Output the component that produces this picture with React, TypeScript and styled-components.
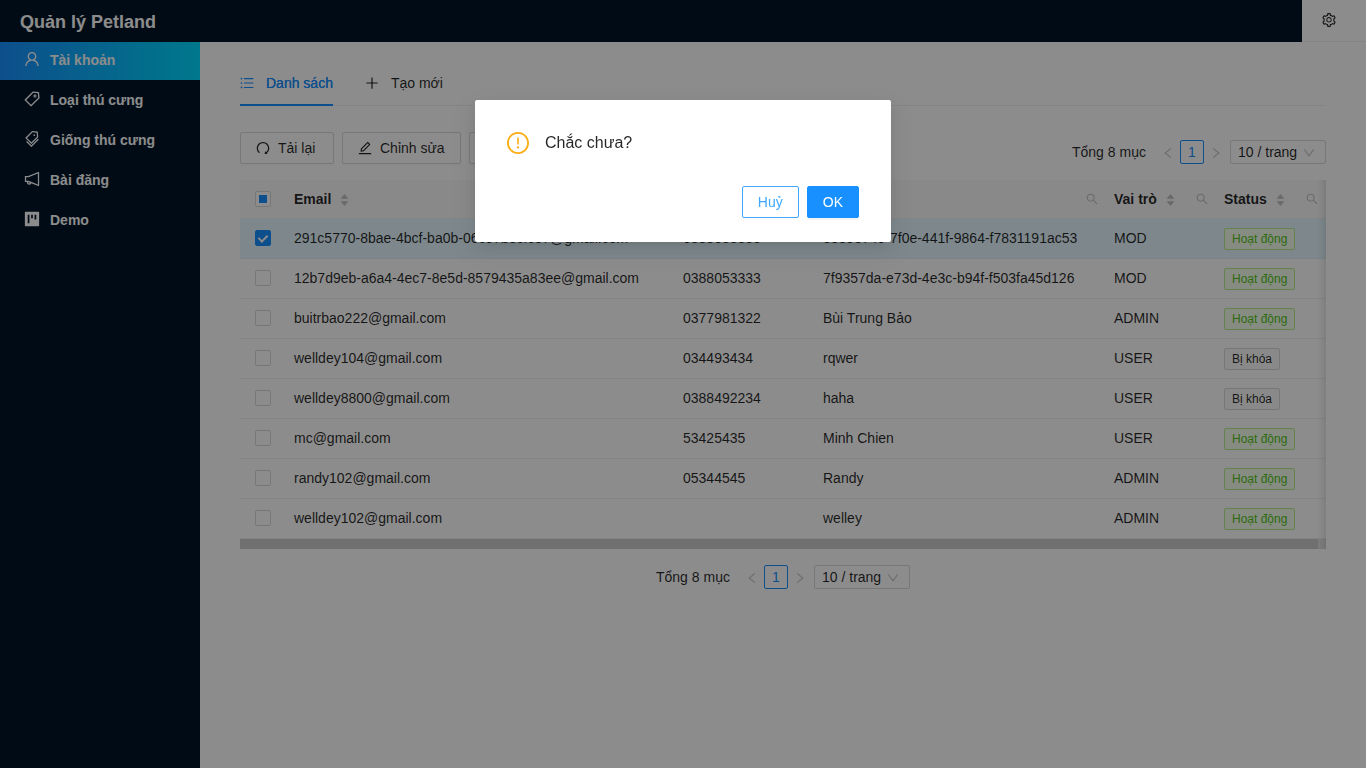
import React from "react";
import styled, { createGlobalStyle, css } from "styled-components";
import type { IconType } from "react-icons";
import {
  AiFillCaretDown,
  AiFillCaretUp,
  AiFillProject,
  AiOutlineDown,
  AiOutlineEdit,
  AiOutlineExclamationCircle,
  AiOutlineDelete,
  AiOutlineLeft,
  AiOutlineNotification,
  AiOutlinePlus,
  AiOutlineRedo,
  AiOutlineRight,
  AiOutlineSearch,
  AiOutlineSetting,
  AiOutlineTag,
  AiOutlineTags,
  AiOutlineUnorderedList,
  AiOutlineUser,
} from "react-icons/ai";

const color = {
  primary: "#1890ff",
  primaryHover: "#40a9ff",
  navy: "#001529",
  text: "rgba(0, 0, 0, 0.85)",
  disabled: "rgba(0, 0, 0, 0.25)",
  border: "#d9d9d9",
  split: "#f0f0f0",
  icon: "#bfbfbf",
};

const GlobalStyle = createGlobalStyle`
  *, *::before, *::after { box-sizing: border-box; }
  body {
    margin: 0;
    background: #fff;
    color: ${color.text};
    font-family: "Liberation Sans", Arial, sans-serif;
    font-size: 14px;
    line-height: 22px;
  }
  button, input, select { font: inherit; color: inherit; margin: 0; }
  svg { display: block; flex: none; }
`;

/* Ant icons carry a 64-unit margin; this draws them edge to edge. */
function Icon({ of: Glyph, size = 14 }: { of: IconType; size?: number }) {
  return <Glyph size={size} viewBox="64 64 896 896" aria-hidden="true" />;
}

/* ---------- Header ---------- */

const Header = styled.header`
  position: fixed;
  inset: 0 0 auto 0;
  z-index: 2;
  display: flex;
  justify-content: space-between;
  height: 42px;
  background: ${color.navy};
`;

const Brand = styled.h1`
  margin: 0;
  padding: 0 20px;
  color: #fff;
  font-size: 18px;
  line-height: 44px;
`;

const SettingsButton = styled.button`
  display: flex;
  align-items: center;
  width: 64px;
  padding: 0 20px 2px;
  border: 0;
  border-bottom: 1px solid ${color.split};
  background: #fff;
`;

/* ---------- Shell ---------- */

const Shell = styled.div`
  display: flex;
  min-height: 100vh;
  padding-top: 40px;
`;

const Sidebar = styled.nav`
  flex: none;
  width: 200px;
  background: ${color.navy};
`;

const MenuLink = styled.a<{ $active?: boolean }>`
  display: flex;
  align-items: center;
  gap: 10px;
  height: 40px;
  padding: 0 24px;
  color: #fff;
  font-weight: 700;
  text-decoration: none;
  ${(p) =>
    p.$active &&
    css`
      background: linear-gradient(to right, #1890ff, #00dbff);
    `}
  svg { margin-bottom: 2px; }
`;

const Main = styled.main`
  flex: 1;
  min-width: 0;
  padding: 20px 40px;
`;

/* ---------- Tabs and toolbar ---------- */

const TabList = styled.div`
  display: flex;
  gap: 32px;
  margin-bottom: 26px;
  box-shadow: inset 0 -1px ${color.split};
`;

const Tab = styled.button<{ $active?: boolean }>`
  display: flex;
  align-items: center;
  gap: 12px;
  height: 46px;
  padding: 2px 0 0;
  border: 0;
  border-bottom: 2px solid ${(p) => (p.$active ? color.primary : "transparent")};
  background: none;
  color: ${(p) => (p.$active ? color.primary : "inherit")};
  text-shadow: ${(p) => (p.$active ? "0 0 currentcolor" : "none")};
`;

const Toolbar = styled.div`
  display: flex;
  justify-content: space-between;
  align-items: flex-end;
  margin-bottom: 16px;
`;

const ButtonGroup = styled.div`
  display: flex;
  gap: 8px;
`;

const Button = styled.button<{ $kind?: "primary" | "outline" }>`
  display: flex;
  align-items: center;
  gap: 8px;
  height: 32px;
  padding: 0 15px;
  border: 1px solid ${color.border};
  border-radius: 2px;
  background: #fff;
  box-shadow: 0 2px 0 rgba(0, 0, 0, 0.016);
  ${ButtonGroup} > & { min-width: 94px; }
  ${(p) =>
    p.$kind === "outline" &&
    css`
      border-color: ${color.primaryHover};
      color: ${color.primaryHover};
    `}
  ${(p) =>
    p.$kind === "primary" &&
    css`
      border-color: ${color.primary};
      background: ${color.primary};
      color: #fff;
      box-shadow: 0 2px 0 rgba(0, 0, 0, 0.045);
    `}
`;

/* ---------- Pagination ---------- */

const Pager = styled.div`
  display: flex;
  align-items: center;
  height: 24px;
`;

const PagerTotal = styled.span`
  min-width: 76px;
  margin-right: 8px;
`;

const PagerButton = styled.button<{ $current?: boolean }>`
  display: flex;
  align-items: center;
  justify-content: center;
  width: 24px;
  height: 24px;
  padding: 0;
  border: 1px solid ${(p) => (p.$current ? color.primary : "transparent")};
  border-radius: 2px;
  background: ${(p) => (p.$current ? "#fff" : "none")};
  color: ${(p) => (p.$current ? color.primary : color.disabled)};
  svg { margin-top: 2px; }
`;

const SizePicker = styled.label`
  position: relative;
  margin-left: 2px;
  svg {
    position: absolute;
    top: 7px;
    right: 11px;
    color: ${color.disabled};
    pointer-events: none;
  }
`;

const SizeSelect = styled.select`
  display: block;
  width: 96px;
  height: 24px;
  padding: 0 7px;
  border: 1px solid ${color.border};
  border-radius: 2px;
  background: #fff;
  appearance: none;
`;

const BottomPager = styled.div`
  display: flex;
  justify-content: center;
  margin-top: 16px;
`;

/* ---------- Table ---------- */

const TableFrame = styled.div`
  position: relative;
  overflow: hidden;
  &::after {
    content: "";
    position: absolute;
    inset: 0 0 0 auto;
    width: 30px;
    box-shadow: inset -10px 0 8px -8px rgba(0, 0, 0, 0.15);
    pointer-events: none;
  }
`;

const Table = styled.table`
  width: 100%;
  min-width: 960px;
  border-collapse: separate;
  border-spacing: 0;
  table-layout: fixed;
`;

const HeadCell = styled.th`
  height: 39px;
  padding: 0 8px;
  border-bottom: 1px solid ${color.split};
  background: #fafafa;
  text-align: left;
`;

const HeadContent = styled.div`
  display: flex;
  align-items: center;
  svg { color: ${color.icon}; }
  > svg { margin-left: auto; }
`;

const Sorter = styled.span`
  display: flex;
  flex-direction: column;
  margin: 2px 0 0 8px;
  svg + svg { margin-top: -4px; }
`;

const Row = styled.tr<{ $selected?: boolean }>`
  background: ${(p) => (p.$selected ? "#e6f7ff" : "#fff")};
  td { border-color: ${(p) => (p.$selected ? "rgba(0, 0, 0, 0.03)" : color.split)}; }
`;

const Cell = styled.td`
  height: 40px;
  padding: 0 8px 2px;
  border-bottom: 1px solid;
  white-space: nowrap;
`;

const Checkbox = styled.input`
  display: block;
  width: 16px;
  height: 16px;
  margin: 0 auto;
  border: 1px solid ${color.border};
  border-radius: 2px;
  background: #fff;
  appearance: none;
  &:checked {
    border-color: ${color.primary};
    background: ${color.primary};
  }
  &:checked::after {
    content: "";
    display: block;
    width: 6px;
    height: 9px;
    margin: 2px 0 0 4px;
    border: solid #fff;
    border-width: 0 2px 2px 0;
    transform: rotate(45deg);
  }
  &:indeterminate::after {
    content: "";
    display: block;
    width: 8px;
    height: 8px;
    margin: 3px;
    background: ${color.primary};
  }
`;

const Tag = styled.span<{ $active: boolean }>`
  display: block;
  width: fit-content;
  margin-top: 2px;
  padding: 0 7px;
  border: 1px solid ${(p) => (p.$active ? "#b7eb8f" : color.border)};
  border-radius: 2px;
  background: ${(p) => (p.$active ? "#f6ffed" : "#fafafa")};
  color: ${(p) => (p.$active ? "#52c41a" : color.text)};
  font-size: 12px;
  line-height: 20px;
`;

const ScrollTrack = styled.div`
  height: 10px;
  padding-right: 8px;
  background: #e6e6e6;
`;

const ScrollThumb = styled.div`
  height: 10px;
  background: #cdcdcd;
`;

/* ---------- Confirm dialog ---------- */

const Mask = styled.div`
  position: fixed;
  inset: 0;
  z-index: 10;
  display: flex;
  justify-content: center;
  align-items: flex-start;
  padding-top: 100px;
  background: rgba(0, 0, 0, 0.45);
`;

const Dialog = styled.div`
  width: 416px;
  padding: 32px 32px 24px;
  border-radius: 2px;
  background: #fff;
  box-shadow: 0 3px 6px -4px rgba(0, 0, 0, 0.12), 0 6px 16px rgba(0, 0, 0, 0.08),
    0 9px 28px 8px rgba(0, 0, 0, 0.05);
`;

const DialogTitle = styled.h2`
  display: flex;
  gap: 16px;
  margin: 0 0 32px;
  font-size: 16px;
  font-weight: 400;
  line-height: 22px;
  svg { color: #faad14; }
`;

const DialogActions = styled.div`
  display: flex;
  justify-content: flex-end;
  gap: 8px;
`;

/* ---------- Data ---------- */

const menu = [
  { label: "Tài khoản", icon: AiOutlineUser },
  { label: "Loại thú cưng", icon: AiOutlineTag },
  { label: "Giống thú cưng", icon: AiOutlineTags },
  { label: "Bài đăng", icon: AiOutlineNotification },
  { label: "Demo", icon: AiFillProject },
];

const columns = [
  { key: "email", title: "Email" },
  { key: "phone", width: 140 },
  { key: "name", width: 291 },
  { key: "role", title: "Vai trò", width: 110 },
  { key: "status", title: "Status", width: 110 },
];

const accounts = [
  { email: "291c5770-8bae-4bcf-ba0b-06c97b3cfc37@gmail.com", phone: "0388053333", name: "88898749-7f0e-441f-9864-f7831191ac53", role: "MOD", active: true },
  { email: "12b7d9eb-a6a4-4ec7-8e5d-8579435a83ee@gmail.com", phone: "0388053333", name: "7f9357da-e73d-4e3c-b94f-f503fa45d126", role: "MOD", active: true },
  { email: "buitrbao222@gmail.com", phone: "0377981322", name: "Bùi Trung Bảo", role: "ADMIN", active: true },
  { email: "welldey104@gmail.com", phone: "034493434", name: "rqwer", role: "USER", active: false },
  { email: "welldey8800@gmail.com", phone: "0388492234", name: "haha", role: "USER", active: false },
  { email: "mc@gmail.com", phone: "53425435", name: "Minh Chien", role: "USER", active: true },
  { email: "randy102@gmail.com", phone: "05344545", name: "Randy", role: "ADMIN", active: true },
  { email: "welldey102@gmail.com", phone: "", name: "welley", role: "ADMIN", active: true },
];

function Pagination() {
  return (
    <Pager>
      <PagerTotal>Tổng 8 mục</PagerTotal>
      <PagerButton aria-label="Trang trước">
        <Icon of={AiOutlineLeft} size={12} />
      </PagerButton>
      <PagerButton $current>1</PagerButton>
      <PagerButton aria-label="Trang sau">
        <Icon of={AiOutlineRight} size={12} />
      </PagerButton>
      <SizePicker>
        <SizeSelect aria-label="Số mục mỗi trang">
          <option>10 / trang</option>
        </SizeSelect>
        <Icon of={AiOutlineDown} size={12} />
      </SizePicker>
    </Pager>
  );
}

function ConfirmDialog() {
  return (
    <Mask>
      <Dialog role="dialog" aria-modal="true" aria-labelledby="confirm-title">
        <DialogTitle id="confirm-title">
          <Icon of={AiOutlineExclamationCircle} size={22} />
          Chắc chưa?
        </DialogTitle>
        <DialogActions>
          <Button $kind="outline">Huỷ</Button>
          <Button $kind="primary">OK</Button>
        </DialogActions>
      </Dialog>
    </Mask>
  );
}

export default function App() {
  return (
    <>
      <GlobalStyle />
      <Header>
        <Brand>Quản lý Petland</Brand>
        <SettingsButton aria-label="Cài đặt">
          <Icon of={AiOutlineSetting} />
        </SettingsButton>
      </Header>
      <Shell>
        <Sidebar>
          {menu.map(({ label, icon }, i) => (
            <MenuLink key={label} href="#" $active={i === 0}>
              <Icon of={icon} size={16} />
              {label}
            </MenuLink>
          ))}
        </Sidebar>
        <Main>
          <TabList role="tablist">
            <Tab role="tab" aria-selected="true" $active>
              <Icon of={AiOutlineUnorderedList} />
              Danh sách
            </Tab>
            <Tab role="tab" aria-selected="false">
              <Icon of={AiOutlinePlus} />
              Tạo mới
            </Tab>
          </TabList>
          <Toolbar>
            <ButtonGroup>
              <Button>
                <Icon of={AiOutlineRedo} />
                Tải lại
              </Button>
              <Button>
                <Icon of={AiOutlineEdit} />
                Chỉnh sửa
              </Button>
              <Button aria-label="Xóa">
                <Icon of={AiOutlineDelete} />
              </Button>
            </ButtonGroup>
            <Pagination />
          </Toolbar>
          <TableFrame>
            <Table>
              <colgroup>
                <col width={46} />
                {columns.map((c) => (
                  <col key={c.key} width={c.width} />
                ))}
              </colgroup>
              <thead>
                <tr>
                  <HeadCell>
                    <Checkbox
                      type="checkbox"
                      aria-label="Chọn tất cả"
                      ref={(el: HTMLInputElement | null) => {
                        if (el) el.indeterminate = true;
                      }}
                    />
                  </HeadCell>
                  {columns.map((c) => (
                    <HeadCell key={c.key}>
                      <HeadContent>
                        {c.title}
                        <Sorter>
                          <AiFillCaretUp size={11} />
                          <AiFillCaretDown size={11} />
                        </Sorter>
                        <Icon of={AiOutlineSearch} size={12} />
                      </HeadContent>
                    </HeadCell>
                  ))}
                </tr>
              </thead>
              <tbody>
                {accounts.map((a, i) => (
                  <Row key={a.email} $selected={i === 0}>
                    <Cell>
                      <Checkbox type="checkbox" aria-label={a.email} defaultChecked={i === 0} />
                    </Cell>
                    <Cell>{a.email}</Cell>
                    <Cell>{a.phone}</Cell>
                    <Cell>{a.name}</Cell>
                    <Cell>{a.role}</Cell>
                    <Cell>
                      <Tag $active={a.active}>{a.active ? "Hoạt động" : "Bị khóa"}</Tag>
                    </Cell>
                  </Row>
                ))}
              </tbody>
            </Table>
            <ScrollTrack>
              <ScrollThumb />
            </ScrollTrack>
          </TableFrame>
          <BottomPager>
            <Pagination />
          </BottomPager>
        </Main>
      </Shell>
      <ConfirmDialog />
    </>
  );
}
